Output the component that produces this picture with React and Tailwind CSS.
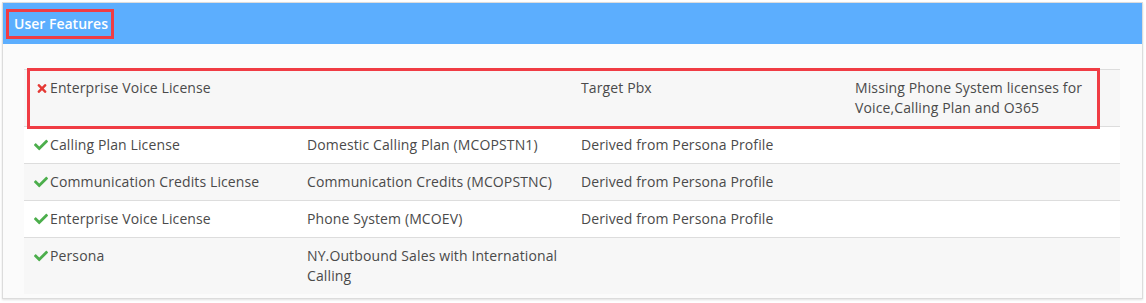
import React from "react";

const Check = () => (
  <svg viewBox="0 0 512 512" className="w-[14px] h-[14px] shrink-0 mt-[3px] ml-[1px]" fill="#4cae4c">
    <path d="M173.898 439.404l-166.4-166.4c-9.997-9.997-9.997-26.206 0-36.204l36.203-36.204c9.997-9.998 26.207-9.998 36.204 0L192 312.69 432.095 72.596c9.997-9.997 26.207-9.997 36.204 0l36.203 36.204c9.997 9.997 9.997 26.206 0 36.204l-294.4 294.401c-9.998 9.997-26.207 9.997-36.204-.001z" />
  </svg>
);

const Cross = () => (
  <svg viewBox="0 0 352 512" className="w-[10px] h-[13px] shrink-0 mt-[4px] ml-[4px] mr-[1px]" fill="#e53935">
    <path d="M242.72 256l100.07-100.07c12.28-12.28 12.28-32.19 0-44.48l-22.24-22.24c-12.28-12.28-32.19-12.28-44.48 0L176 189.28 75.93 89.21c-12.28-12.28-32.19-12.28-44.48 0L9.21 111.45c-12.28 12.28-12.28 32.19 0 44.48L109.28 256 9.21 356.07c-12.28 12.28-12.28 32.19 0 44.48l22.24 22.24c12.28 12.28 32.2 12.28 44.48 0L176 322.72l100.07 100.07c12.28 12.28 32.2 12.28 44.48 0l22.24-22.24c12.28-12.28 12.28-32.19 0-44.48L242.72 256z" />
  </svg>
);

const rows = [
  { ok: false, a: "Enterprise Voice License", b: "", c: "Target Pbx", d: "Missing Phone System licenses for Voice,Calling Plan and O365" },
  { ok: true, a: "Calling Plan License", b: "Domestic Calling Plan (MCOPSTN1)", c: "Derived from Persona Profile", d: "" },
  { ok: true, a: "Communication Credits License", b: "Communication Credits (MCOPSTNC)", c: "Derived from Persona Profile", d: "" },
  { ok: true, a: "Enterprise Voice License", b: "Phone System (MCOEV)", c: "Derived from Persona Profile", d: "" },
  { ok: true, a: "Persona", b: "NY.Outbound Sales with International Calling", c: "", d: "" },
];

export default function App() {
  return (
    <div className="pl-[2px] pt-[2px] w-[1146px] h-[303px] bg-white" style={{ fontFamily: '"Open Sans", sans-serif' }}>
      <div className="w-[1141px] border border-[#dcdcdc] shadow-[0_1px_2px_rgba(0,0,0,0.12)] bg-[#fbfbfb]">
        <div className="h-[41px] bg-[#5caefe] flex items-center pl-[3px]">
          <span className="border-[3px] border-[#f03c44] h-[30px] pl-[5px] pr-[3px] flex items-center text-white text-[14px] font-semibold leading-[20px]">
            User Features
          </span>
        </div>
        <div className="pt-[25px] pb-[4px] pl-[21px] pr-[20px]">
          <div className="relative w-[1096px] text-[14px] leading-[20px] text-[#4a4a4a] tracking-[0.12px]">
            {rows.map((r, i) => (
              <div
                key={i}
                className={`grid grid-cols-4 border-t border-[#dddddd] ${i % 2 === 0 ? "bg-[#f7f7f7]" : "bg-white"}`}
              >
                <div className="py-[8px] pl-[9px] pr-[8px] flex items-start gap-[2px]">
                  {r.ok ? <Check /> : <Cross />}
                  <span>{r.a}</span>
                </div>
                <div className="py-[8px] pl-[9px] pr-[8px]">{r.b}</div>
                <div className="py-[8px] pl-[9px] pr-[8px]">{r.c}</div>
                <div className="py-[8px] pl-[9px] pr-[8px]">{r.d}</div>
              </div>
            ))}
            <div className="absolute left-[3px] top-[-1px] w-[1073px] h-[61px] border-[3px] border-[#f03c44] pointer-events-none" />
          </div>
        </div>
      </div>
    </div>
  );
}
